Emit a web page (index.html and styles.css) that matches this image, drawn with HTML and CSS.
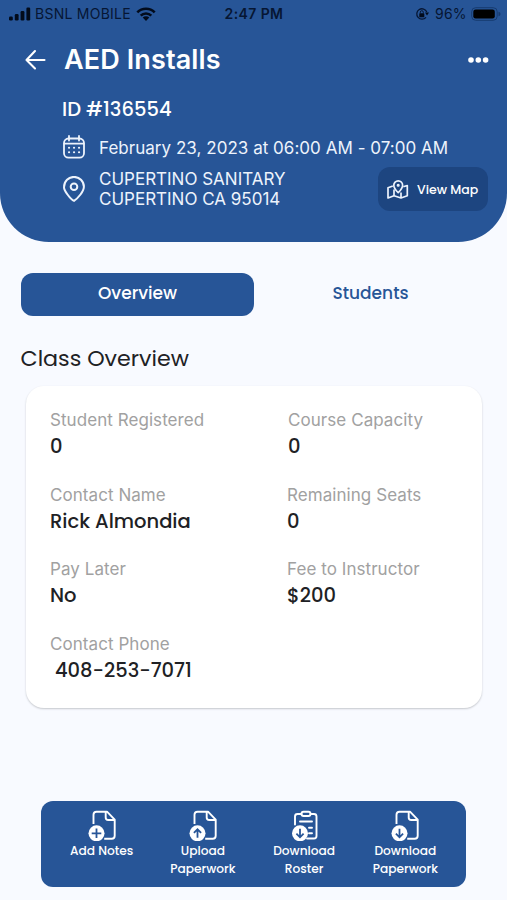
FILE: index.html
```html
<!DOCTYPE html>
<html lang="en">
<head>
<meta charset="utf-8">
<title>AED Installs</title>
<link rel="stylesheet" href="styles.css">
</head>
<body>
<svg class="defs" width="0" height="0" aria-hidden="true">
  <symbol id="file" viewBox="0 0 30 32">
    <path d="M6.500 15V5.700q0-3 3-3h10.500l7.700 8v16q0 3-3 3h-7.500M18.700 3v5.500q0 2.500 2.500 2.500h6.500" fill="none" stroke="#fff" stroke-width="1.900" stroke-linejoin="round"/>
    <circle cx="9.500" cy="24.300" r="8" fill="#fff"/>
  </symbol>
</svg>
<main class="screen">
  <header class="header">
    <div class="status">
      <div class="status-left">
        <svg width="22" height="14" viewBox="0 0 22 14"><rect x="0" y="9.500" width="3.800" height="4" rx="1.200"/><rect x="5.800" y="7" width="3.800" height="6.500" rx="1.200"/><rect x="11.600" y="4" width="3.800" height="9.500" rx="1.200"/><rect x="17.400" y=".5" width="3.800" height="13" rx="1.200"/></svg>
        <span class="carrier">BSNL MOBILE</span>
        <svg class="wifi" width="20" height="14" viewBox="0 0 20 14"><g fill="none" stroke="#020b1b" stroke-width="2.600"><path d="M1.300 5.300a12.300 12.300 0 0 1 17.400 0M4.700 8.700a7.500 7.500 0 0 1 10.600 0"/></g><path d="M6.700 10.600a4.700 4.700 0 0 1 6.600 0L10 14z"/></svg>
      </div>
      <span class="time">2:47 PM</span>
      <div class="status-right">
        <svg width="14" height="14" viewBox="0 0 14 14"><path d="M11.800 5A5.200 5.200 0 1 0 11 10.300" fill="none" stroke="#061633" stroke-width="1.300"/><path d="M10 5.500h4l-2 3z"/><rect x="4.300" y="6.300" width="5" height="4" rx=".6"/><path d="M5.300 6.500V5.200a1.500 1.500 0 0 1 3 0v1.300" fill="none" stroke="#061633"/></svg>
        <span class="percent">96%</span>
        <svg width="30" height="14" viewBox="0 0 30 14"><rect x=".7" y=".7" width="25.500" height="12.600" rx="4" fill="none" stroke="#173b70"/><rect x="2.300" y="2.500" width="21.500" height="9" rx="2.300" fill="#000"/><path d="M27.500 4.700q2 .5 2 2.300t-2 2.300z" fill="#173b70"/></svg>
      </div>
    </div>
    <div class="titlebar">
      <svg width="22" height="22" viewBox="0 0 22 22" fill="none" stroke="#fff" stroke-width="2.100" stroke-linecap="round" stroke-linejoin="round"><path d="M19.500 11H1.500M10 2 1.500 11l8.500 8.500"/></svg>
      <h1 class="title">AED Installs</h1>
      <svg class="more" width="22" height="6" viewBox="0 0 22 6" fill="#fff"><circle cx="3" cy="3" r="2.800"/><circle cx="10.300" cy="3" r="2.800"/><circle cx="17.600" cy="3" r="2.800"/></svg>
    </div>
    <div class="class-id">ID #136554</div>
    <div class="date-row">
      <svg width="22" height="24" viewBox="0 0 22 24" fill="none" stroke="#edf3fc" stroke-width="1.800" stroke-linecap="round"><rect x="1" y="3.500" width="20" height="19.200" rx="4.500"/><path d="M1.500 8.700h19M6 1v4.500M16 1v4.500"/><path d="M6 12.700h.1M11 12.700h.1M16 12.700h.1M6 17.300h.1M11 17.300h.1M16 17.300h.1" stroke-width="2.100"/></svg>
      <span class="date">February 23, 2023 at 06:00 AM - 07:00 AM</span>
    </div>
    <div class="place-row">
      <svg class="pin" width="22" height="26" viewBox="0 0 22 26" fill="none" stroke="#edf3fc" stroke-width="2"><path d="M11 24.800Q8.500 24 4.500 18.500T1.100 10.800a9.900 9.900 0 0 1 19.800 0q0 3.200-3.400 7.700T11 24.800z"/><circle cx="11" cy="10.800" r="3.300"/></svg>
      <address class="place"><span class="place-name">CUPERTINO SANITARY</span><span class="place-city">CUPERTINO CA 95014</span></address>
      <a class="map-button">
        <svg width="22" height="19" viewBox="0 0 22 19" fill="none" stroke="#edf3fc" stroke-width="1.700" stroke-linejoin="round"><path d="M5.800 6 1 7.700v10.300l6-2.200 7 2.200 6.300-2.200V5.500l-4 1.200M7 9.500v6.300M14 12.500V18"/><path d="M11.200 12.700Q6.800 8.500 6.800 5.300a4.400 4.400 0 0 1 8.800 0q0 3.200-4.400 7.400z"/><circle cx="11.200" cy="5.200" r=".7"/></svg>
        <span class="map-label">View Map</span>
      </a>
    </div>
  </header>
  <nav class="tabs">
    <a class="tab active">Overview</a>
    <a class="tab">Students</a>
  </nav>
  <h2 class="heading">Class Overview</h2>
  <dl class="card">
    <div class="field"><dt>Student Registered</dt><dd>0</dd></div>
    <div class="field nudge-right"><dt>Course Capacity</dt><dd>0</dd></div>
    <div class="field"><dt>Contact Name</dt><dd>Rick Almondia</dd></div>
    <div class="field"><dt>Remaining Seats</dt><dd>0</dd></div>
    <div class="field"><dt>Pay Later</dt><dd>No</dd></div>
    <div class="field"><dt>Fee to Instructor</dt><dd>$200</dd></div>
    <div class="field"><dt>Contact Phone</dt><dd class="phone">408-253-7071</dd></div>
  </dl>
  <footer class="actions">
    <a class="action"><svg width="30" height="32" viewBox="0 0 30 32"><use href="#file"/><path class="mark" d="M9.500 19.500v9.600M4.700 24.300h9.600"/></svg><span>Add Notes</span></a>
    <a class="action"><svg width="30" height="32" viewBox="0 0 30 32"><use href="#file"/><path class="mark" d="M9.500 28.800v-8M5.900 23.900l3.600-3.600 3.600 3.600"/></svg><span>Upload<br>Paperwork</span></a>
    <a class="action"><svg width="30" height="32" viewBox="0 0 30 32"><g fill="none" stroke="#fff" stroke-width="1.900" stroke-linecap="round"><path d="M12.500 5H8.500q-2.500 0-2.500 2.500v8M21.500 5h3.500q2.500 0 2.500 2.500v19.500q0 2.500-2.500 2.500h-7"/><rect x="12.500" y="2.700" width="9" height="4.300" rx="2"/><path d="M11 12.500h12M20 18.700h3M20 24.300h3"/></g><circle cx="11" cy="24.300" r="8" fill="#fff"/><path class="mark" d="M11 19.800v8M7.400 24.700l3.600 3.600 3.600-3.600"/></svg><span>Download<br>Roster</span></a>
    <a class="action"><svg width="30" height="32" viewBox="0 0 30 32"><use href="#file"/><path class="mark" d="M9.500 19.800v8M5.900 24.700l3.600 3.600 3.600-3.600"/></svg><span>Download<br>Paperwork</span></a>
  </footer>
</main>
</body>
</html>
```
FILE: styles.css
```css
* { box-sizing: border-box; }
body {
  margin: 0;
  font-family: Poppins, Inter, sans-serif;
  background: #f8faff;
  color: #202124;
}
svg { display: block; flex: none; }
.defs { position: absolute; }
.screen { height: 900px; display: flex; flex-direction: column; overflow: hidden; }

.header {
  height: 242px;
  flex: none;
  background: #275597;
  border-radius: 0 0 49px 49px;
  color: #fff;
}
.status {
  display: grid;
  grid-template-columns: 1fr auto 1fr;
  align-items: center;
  height: 28px;
  padding: 0 6px 0 9px;
  color: #061633;
  font: 14px/28px Inter, sans-serif;
  white-space: nowrap;
}
.status svg { fill: #020b1b; }
.status-left, .status-right { display: flex; align-items: center; }
.status-right { justify-content: flex-end; }
.carrier { margin-left: 4px; width: 96px; letter-spacing: .25px; }
.wifi { margin-left: 5px; }
.time { margin-right: 2px; font-weight: 600; letter-spacing: .4px; }
.percent { margin: 0 5px 0 6px; width: 31px; letter-spacing: .2px; }
.titlebar { display: flex; align-items: center; height: 64px; padding: 0 17px 0 25px; }
.title { margin: 0 0 0 17px; font: 600 27px/64px Inter, sans-serif; letter-spacing: .12px; }
.more { margin-left: auto; }
.class-id { height: 34px; padding: 1px 0 0 62px; font-size: 19.500px; font-weight: 500; line-height: 34px; }
.date-row { display: flex; align-items: center; height: 42px; padding-left: 63px; }
.date, .place, dt { font: 17px Inter, sans-serif; letter-spacing: .06px; white-space: nowrap; }
.date { margin-left: 14px; padding-top: 1px; letter-spacing: .03px; color: #edf3fc; }
.place-row { display: flex; align-items: center; height: 42px; padding: 0 19px 0 63px; }
.place { margin-left: 14px; color: #edf3fc; line-height: 20.500px; letter-spacing: 0; }
.place span { display: block; }
.map-button {
  display: flex;
  align-items: center;
  width: 110px;
  height: 44px;
  margin-left: auto;
  padding-left: 9px;
  border-radius: 12px;
  background: #1d4580;
}
.map-label { margin-left: 8px; padding-top: 1px; font-size: 12.500px; font-weight: 500; white-space: nowrap; }

.tabs { display: grid; grid-template-columns: 1fr 1fr; height: 43px; flex: none; margin: 31px 20px 0 21px; }
.tab { border-radius: 12px; color: #275597; font-size: 17px; font-weight: 500; line-height: 40px; text-align: center; }
.tab.active { background: #275597; color: #fff; }
.heading { margin: 27px 0 0 20.500px; height: 32px; font-size: 22.200px; font-weight: 400; line-height: 32px; }

.card {
  display: grid;
  grid-template-columns: 237px 1fr;
  grid-auto-rows: 74.500px;
  align-content: start;
  width: 456px;
  height: 322px;
  flex: none;
  margin: 11px 0 0 26px;
  padding: 21px 0 0 24px;
  border-radius: 18px;
  background: #fff;
  box-shadow: 0 1px 2px #c4c7cc;
}
.nudge-right { padding-left: 1px; }
dt { height: 27px; line-height: 27px; color: #a1a1a1; }
dd { margin: 0; height: 26px; font-size: 19.500px; font-weight: 500; line-height: 26px; }
.phone { padding-left: 5px; }

.actions {
  display: grid;
  grid-template-columns: repeat(4, 1fr);
  width: 425px;
  height: 86px;
  margin: 93px 0 0 41px;
  padding: 8px 10px 0;
  border-radius: 12px;
  background: #275597;
  color: #fff;
}
.action { display: flex; flex-direction: column; align-items: center; font-size: 12.200px; font-weight: 500; line-height: 18px; text-align: center; }
.action span { padding-top: 1px; }
.mark { fill: none; stroke: #275597; stroke-width: 1.800; }
```
